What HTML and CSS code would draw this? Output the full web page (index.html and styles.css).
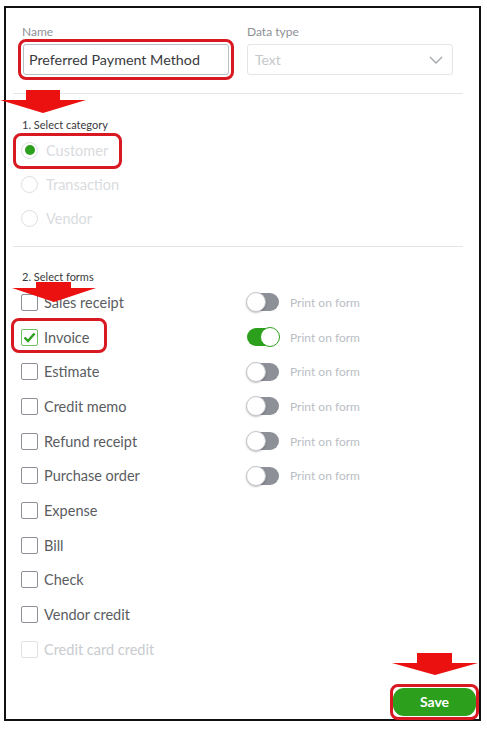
FILE: index.html
```html
<!DOCTYPE html>
<html>
	<head>
		<title>Custom field</title>
		<link rel="stylesheet" href="styles.css">
	</head>
	<body>
		<div class="frame">
			<div class="panel">
				<div class="top-row">
					<div class="field name-field">
						<label class="field-label">Name</label>
						<div class="hl-box">
							<div class="text-input">Preferred Payment Method</div>
						</div>
					</div>
					<div class="field type-field">
						<label class="field-label">Data type</label>
						<div class="select-input">
							<span>Text</span>
							<svg width="14" height="8" viewBox="0 0 14 8"><path d="M1 1 L7 7 L13 1" fill="none" stroke="#a4a7ad" stroke-width="1.4"/></svg>
						</div>
					</div>
				</div>
				<hr class="divider first">

				<div class="step-title cat-title">1. Select category</div>
				<div class="radio-row">
					<span class="radio checked"></span><span class="radio-label">Customer</span>
					<span class="mark cust-mark"></span>
				</div>
				<div class="radio-row">
					<span class="radio"></span><span class="radio-label">Transaction</span>
				</div>
				<div class="radio-row">
					<span class="radio"></span><span class="radio-label">Vendor</span>
				</div>
				<hr class="divider second">

				<div class="step-title forms-title">2. Select forms</div>
				<div class="form-list">
					<div class="form-row">
						<div class="check-cell"><span class="check"></span><span class="check-label">Sales receipt</span></div>
						<div class="toggle-cell"><span class="toggle"></span><span class="toggle-label">Print on form</span></div>
					</div>
					<div class="form-row">
						<div class="check-cell"><span class="check on"><svg width="13" height="11" viewBox="0 0 13 11"><path d="M1.5 5.5 L5 9 L11.5 1.5" fill="none" stroke="#2ca01c" stroke-width="2.4"/></svg></span><span class="check-label">Invoice</span></div>
						<div class="toggle-cell"><span class="toggle on"></span><span class="toggle-label">Print on form</span></div>
						<span class="mark inv-mark"></span>
					</div>
					<div class="form-row">
						<div class="check-cell"><span class="check"></span><span class="check-label">Estimate</span></div>
						<div class="toggle-cell"><span class="toggle"></span><span class="toggle-label">Print on form</span></div>
					</div>
					<div class="form-row">
						<div class="check-cell"><span class="check"></span><span class="check-label">Credit memo</span></div>
						<div class="toggle-cell"><span class="toggle"></span><span class="toggle-label">Print on form</span></div>
					</div>
					<div class="form-row">
						<div class="check-cell"><span class="check"></span><span class="check-label">Refund receipt</span></div>
						<div class="toggle-cell"><span class="toggle"></span><span class="toggle-label">Print on form</span></div>
					</div>
					<div class="form-row">
						<div class="check-cell"><span class="check"></span><span class="check-label">Purchase order</span></div>
						<div class="toggle-cell"><span class="toggle"></span><span class="toggle-label">Print on form</span></div>
					</div>
					<div class="form-row">
						<div class="check-cell"><span class="check"></span><span class="check-label">Expense</span></div>
					</div>
					<div class="form-row">
						<div class="check-cell"><span class="check"></span><span class="check-label">Bill</span></div>
					</div>
					<div class="form-row">
						<div class="check-cell"><span class="check"></span><span class="check-label">Check</span></div>
					</div>
					<div class="form-row">
						<div class="check-cell"><span class="check"></span><span class="check-label">Vendor credit</span></div>
					</div>
					<div class="form-row disabled">
						<div class="check-cell"><span class="check"></span><span class="check-label">Credit card credit</span></div>
					</div>
				</div>
			</div>

			<div class="footer">
				<button class="save-btn">Save</button>
				<span class="mark save-mark"></span>
			</div>

			<!-- annotation arrows -->
			<svg class="arrow arrow-cat" width="86" height="23" viewBox="0 0 86 23"><polygon points="26,0 60,0 60,10 86,10 43,23 0,10 26,10" fill="#ec1111"/></svg>
			<svg class="arrow arrow-forms" width="84" height="20" viewBox="0 0 84 20"><polygon points="24,0 59,0 59,6 84,6 42,20 0,6 24,6" fill="#ec1111"/></svg>
			<svg class="arrow arrow-save" width="86" height="22" viewBox="0 0 86 22"><polygon points="25,0 60,0 60,10 86,10 43,22 0,10 25,10" fill="#ec1111"/></svg>
		</div>
	</body>
</html>
```

FILE: styles.css
```css
body {
	margin: 0;
	font-family: Lato, "Open Sans", sans-serif;
	color: #393a3d;
	background: #fff;
}
.frame {
	position: relative;
	box-sizing: border-box;
	margin: 6px 0 0 4px;
	width: 477px;
	height: 715px;
	border: 2px solid #111;
	display: flex;
	flex-direction: column;
}
.panel {
	padding: 17px 16px 0 7px;
}
.top-row {
	display: flex;
	gap: 13px;
	padding-left: 5px;
}
.name-field {
	width: 216px;
}
.type-field {
	width: 206px;
}
.field-label {
	display: block;
	font-size: 12px;
	line-height: 14px;
	color: #8d9096;
}
.name-field .field-label {
	padding-left: 4px;
}
.hl-box {
	border: 3px solid #d81921;
	border-radius: 8px;
	padding: 2px;
}
.text-input {
	box-sizing: border-box;
	height: 31px;
	border: 1px solid #babec5;
	border-radius: 3px;
	padding: 0 5px;
	font-size: 14.3px;
	line-height: 29px;
	color: #393a3d;
}
.select-input {
	box-sizing: border-box;
	margin-top: 5px;
	height: 31px;
	border: 1px solid #e3e5e8;
	border-radius: 3px;
	padding: 0 9px 0 7px;
	display: flex;
	align-items: center;
	justify-content: space-between;
	font-size: 14px;
	color: #c6c8cc;
}
.divider {
	border: none;
	border-top: 1px solid #e3e5e8;
	margin: 0;
}
.divider.first {
	margin-top: 13px;
}
.divider.second {
	margin-top: 11px;
}
.step-title {
	font-size: 11px;
	line-height: 14px;
	padding-left: 9px;
	color: #393a3d;
}
.cat-title {
	margin-top: 24px;
	margin-bottom: 1px;
}
.forms-title {
	margin-top: 23px;
	margin-bottom: 1px;
}
.radio-row {
	position: relative;
	height: 34px;
	display: flex;
	align-items: center;
	padding-left: 8px;
}
.radio {
	box-sizing: border-box;
	width: 17px;
	height: 17px;
	border: 1px solid #dcdee2;
	border-radius: 50%;
	display: flex;
	align-items: center;
	justify-content: center;
}
.radio.checked::after {
	content: "";
	width: 10px;
	height: 10px;
	border-radius: 50%;
	background: #2ca01c;
}
.radio-label {
	margin-left: 8px;
	font-size: 14.5px;
	color: #d9dbde;
}
.mark {
	position: absolute;
	box-sizing: border-box;
	border: 3px solid #d81921;
	border-radius: 8px;
	pointer-events: none;
}
.cust-mark {
	left: 0;
	top: 0;
	width: 109px;
	height: 36px;
}
.form-row {
	position: relative;
	height: 34.7px;
	display: grid;
	grid-template-columns: 226px 1fr;
	align-items: center;
	padding-left: 8px;
}
.check-cell,
.toggle-cell {
	display: flex;
	align-items: center;
}
.check {
	box-sizing: border-box;
	width: 17px;
	height: 17px;
	border: 1px solid #8d9096;
	border-radius: 2px;
	display: flex;
	align-items: center;
	justify-content: center;
}
.check.on {
	border-color: #6fbf63;
}
.check-label {
	margin-left: 6px;
	font-size: 14.5px;
	color: #5a5c61;
}
.form-row.disabled .check {
	border-color: #e0e2e5;
}
.form-row.disabled .check-label {
	color: #c9cbcf;
}
.toggle {
	position: relative;
	width: 32px;
	height: 18px;
	border-radius: 9px;
	background: #8d9096;
}
.toggle::after {
	content: "";
	position: absolute;
	left: -1px;
	top: -1px;
	box-sizing: border-box;
	width: 20px;
	height: 20px;
	border-radius: 50%;
	background: #fff;
	border: 1px solid #c3c6cb;
	box-shadow: 0 1px 2px rgba(0, 0, 0, 0.25);
}
.toggle.on {
	background: #2ca01c;
}
.toggle.on::after {
	left: auto;
	right: -1px;
	border-color: #2ca01c;
	box-shadow: none;
}
.toggle-label {
	margin-left: 11px;
	font-size: 12px;
	color: #babec5;
}
.inv-mark {
	left: -2px;
	top: -2px;
	width: 96px;
	height: 35px;
}
.footer {
	position: relative;
	margin-top: auto;
	align-self: flex-end;
	margin-right: 3px;
	margin-bottom: 3px;
}
.save-btn {
	display: block;
	width: 83px;
	height: 28px;
	padding: 0 0 2px;
	border: none;
	border-radius: 11px;
	background: #2ca01c;
	color: #fff;
	font-family: Lato, "Open Sans", sans-serif;
	font-weight: bold;
	font-size: 14px;
}
.save-mark {
	left: -3px;
	top: -4px;
	width: 89px;
	height: 36px;
}
.arrow {
	position: absolute;
}
.arrow-cat {
	left: -6px;
	top: 82px;
}
.arrow-forms {
	left: 6px;
	top: 274px;
}
.arrow-save {
	left: 386px;
	top: 645px;
}
```
